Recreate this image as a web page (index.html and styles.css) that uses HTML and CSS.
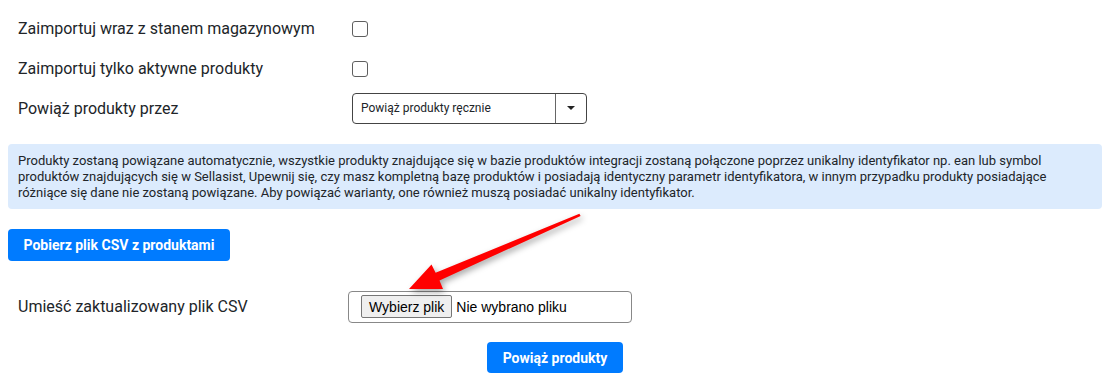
FILE: index.html
```html
<!DOCTYPE html>
<html lang="pl">
<head>
    <meta charset="UTF-8">
    <meta name="viewport" content="width=device-width, initial-scale=1.0">
    <title>Import produktów</title>
    <link rel="stylesheet" href="styles.css">
</head>
<body>
    <div class="container">
        <!-- Options -->
        <div class="row">
            <label class="label">Zaimportuj wraz z stanem magazynowym</label>
            <span class="checkbox"></span>
        </div>
        <div class="row">
            <label class="label">Zaimportuj tylko aktywne produkty</label>
            <span class="checkbox"></span>
        </div>
        <div class="row">
            <label class="label">Powiąż produkty przez</label>
            <div class="select">
                <span class="select-value">Powiąż produkty ręcznie</span>
                <span class="select-caret"><span class="caret"></span></span>
            </div>
        </div>

        <!-- Info -->
        <div class="info">
            Produkty zostaną powiązane automatycznie, wszystkie produkty znajdujące się w bazie produktów integracji zostaną połączone poprzez unikalny identyfikator np. ean lub symbol produktów znajdujących się w Sellasist, Upewnij się, czy masz kompletną bazę produktów i posiadają identyczny parametr identyfikatora, w innym przypadku produkty posiadające różniące się dane nie zostaną powiązane. Aby powiązać warianty, one również muszą posiadać unikalny identyfikator.
        </div>

        <button class="btn btn-download">Pobierz plik CSV z produktami</button>

        <!-- Upload -->
        <div class="row upload-row">
            <label class="label upload-label">Umieść zaktualizowany plik CSV</label>
            <div class="file-box">
                <span class="file-btn">Wybierz plik</span>
                <span class="file-name">Nie wybrano pliku</span>
            </div>
        </div>

        <div class="actions">
            <button class="btn btn-submit">Powiąż produkty</button>
        </div>
    </div>

    <!-- Annotation arrow -->
    <svg class="arrow" width="1115" height="382" viewBox="0 0 1115 382">
        <polygon points="409,289 443,289 439.5,280.5 580.6,216 579.4,213.8 435.6,272.8 431.5,264.5" fill="#ff0000"/>
    </svg>
</body>
</html>
```

FILE: styles.css
```css
* {
    margin: 0;
    padding: 0;
    box-sizing: border-box;
}

body {
    font-family: Roboto, "Liberation Sans", Arial, sans-serif;
    color: #212529;
    background-color: #fff;
    width: 1115px;
    height: 382px;
    overflow: hidden;
    position: relative;
}

.container {
    padding: 8px 13px 0 8px;
}

.row {
    display: flex;
    align-items: center;
    height: 40px;
    padding-left: 10px;
}

.label {
    width: 334px;
    font-size: 16px;
}

.checkbox {
    width: 16px;
    height: 16px;
    border: 1px solid #5f5f5f;
    border-radius: 3px;
    margin-top: 1px;
}

.select {
    display: flex;
    width: 235px;
    height: 31px;
    border: 1px solid #444;
    border-radius: 4px;
    font-size: 12px;
}

.select-value {
    flex: 1;
    display: flex;
    align-items: center;
    padding-left: 8px;
}

.select-caret {
    width: 31px;
    border-left: 1px solid #666;
    display: flex;
    justify-content: center;
    align-items: center;
}

.caret {
    width: 0;
    height: 0;
    border-left: 4px solid transparent;
    border-right: 4px solid transparent;
    border-top: 4px solid #222;
}

.info {
    margin-top: 16px;
    background-color: #dcebfd;
    border-radius: 4px;
    padding: 9px 10px 8px;
    font-size: 13px;
    line-height: 16px;
}

.btn {
    background-color: #007bff;
    color: #fff;
    border: none;
    border-radius: 4px;
    font-family: Roboto, "Liberation Sans", Arial, sans-serif;
    font-weight: bold;
    font-size: 14px;
    cursor: pointer;
}

.btn-download {
    display: block;
    margin-top: 20px;
    width: 222px;
    height: 32px;
}

.upload-row {
    margin-top: 29px;
    height: 33px;
}

.upload-label {
    width: 330px;
}

.file-box {
    display: flex;
    align-items: center;
    width: 284px;
    height: 32px;
    border: 1px solid #888;
    border-radius: 4px;
    padding-left: 12px;
    font-family: "Liberation Sans", Arial, sans-serif;
    font-size: 14px;
    color: #000;
}

.file-btn {
    background-color: #efefef;
    border: 1px solid #767676;
    border-radius: 2px;
    height: 23px;
    padding: 0 7px;
    display: flex;
    align-items: center;
    margin-right: 4px;
}

.actions {
    display: flex;
    justify-content: center;
    margin-top: 19px;
}

.btn-submit {
    width: 136px;
    height: 31px;
}

.arrow {
    position: absolute;
    left: 0;
    top: 0;
    pointer-events: none;
    filter: drop-shadow(2px 3px 3px rgba(0, 0, 0, 0.35));
}
```
